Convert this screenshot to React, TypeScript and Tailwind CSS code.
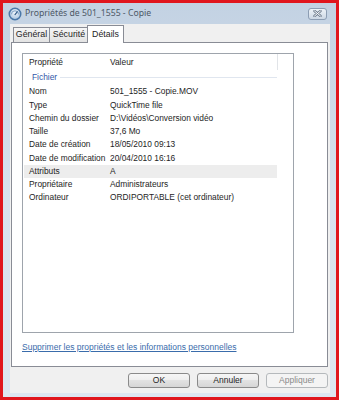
import React from "react";

const rows: [string, string][] = [
  ["Nom", "501_1555 - Copie.MOV"],
  ["Type", "QuickTime file"],
  ["Chemin du dossier", "D:\\Vidéos\\Conversion vidéo"],
  ["Taille", "37,6 Mo"],
  ["Date de création", "18/05/2010 09:13"],
  ["Date de modification", "20/04/2010 16:16"],
  ["Attributs", "A"],
  ["Propriétaire", "Administrateurs"],
  ["Ordinateur", "ORDIPORTABLE (cet ordinateur)"],
];

const WindowIcon: React.FC = () => (
  <svg width="14" height="14" viewBox="0 0 14 14" aria-hidden="true">
    <defs>
      <radialGradient id="ic" cx="50%" cy="35%" r="65%">
        <stop offset="0%" stopColor="#f2f7fc" />
        <stop offset="100%" stopColor="#a9c4df" />
      </radialGradient>
    </defs>
    <circle cx="7" cy="7" r="5.7" fill="url(#ic)" stroke="#4a78a8" strokeWidth="1.6" />
    <path d="M3.4 7.4a3.6 3.6 0 0 1 7.2 0" fill="none" stroke="#7fa2c6" strokeWidth="1" />
    <path d="M7 7.6 9.2 4.8" stroke="#2f5a88" strokeWidth="1.1" strokeLinecap="round" />
  </svg>
);

const CloseButton: React.FC = () => (
  <div className="flex h-[12px] w-[19px] items-center justify-center rounded-[3px] border border-[#8c9db3] bg-gradient-to-b from-[#eef3f8] to-[#cdd8e5]">
    <svg width="9" height="7" viewBox="0 0 9 7" aria-hidden="true">
      <path d="M1.5 1 7.5 6M7.5 1 1.5 6" stroke="#6b7a8c" strokeWidth="2.4" strokeLinecap="round" />
      <path d="M1.5 1 7.5 6M7.5 1 1.5 6" stroke="#ffffff" strokeWidth="1" strokeLinecap="round" />
    </svg>
  </div>
);

export default function App() {
  return (
    <div className="h-[400px] w-[339px] bg-[#e0161e] p-[3px] font-['Liberation_Sans',Arial,sans-serif]">
      <div className="flex h-full flex-col bg-gradient-to-b from-[#c3d2e3] via-[#d8e2ee] to-[#dde6f0]">
        {/* title bar */}
        <div className="flex h-[21px] shrink-0 items-center pl-[5px] pr-[9px]">
          <WindowIcon />
          <span className="ml-[3px] font-['Noto_Sans',sans-serif] text-[8.7px] text-[#4d5866]">
            Propriétés de 501_1555 - Copie
          </span>
          <div className="ml-auto">
            <CloseButton />
          </div>
        </div>

        {/* client area */}
        <div className="mb-[4px] ml-[7px] mr-[6px] flex flex-1 flex-col bg-[#f0f0f0]">
          {/* tabs */}
          <div className="relative z-10 -mb-px flex h-[19px] shrink-0 items-end pl-[3px] text-[8.8px] text-[#1e1e1e]">
            <div className="flex h-[16px] w-[37px] items-center justify-center border border-[#898c95] bg-gradient-to-b from-[#f6f6f6] to-[#e3e3e3]">
              Général
            </div>
            <div className="-ml-px flex h-[16px] w-[40px] items-center justify-center border border-[#898c95] bg-gradient-to-b from-[#f6f6f6] to-[#e3e3e3]">
              Sécurité
            </div>
            <div className="-ml-[2px] flex h-[18px] w-[37px] items-start justify-center border border-b-0 border-[#898c95] bg-white pt-[2px]">
              Détails
            </div>
          </div>

          {/* tab panel */}
          <div className="ml-px mr-[2px] flex flex-1 flex-col border border-[#898c95] bg-white pl-[10px] pt-[10px]">
            <div className="flex h-[280px] w-[272px] flex-col border border-[#9ea4ac] text-[8.4px] text-[#1e1e1e]">
              {/* header */}
              <div className="flex h-[16px] shrink-0 items-center">
                <div className="w-[87px] pl-[6px]">Propriété</div>
                <div className="h-full w-[168px] border-r border-[#e1e4e8] leading-[16px]">Valeur</div>
              </div>
              {/* group */}
              <div className="flex h-[15px] w-[254px] shrink-0 items-center pl-[9px]">
                <span className="text-[#3357a8]">Fichier</span>
                <div className="ml-[3px] h-px flex-1 bg-[#e0e6ef]" />
              </div>
              {rows.map(([k, v]) => (
                <div
                  key={k}
                  className={`ml-px flex h-[13.25px] w-[253px] shrink-0 items-center pl-[5px] ${
                    k === "Attributs" ? "bg-[#ededed]" : ""
                  }`}
                >
                  <div className="w-[81px] whitespace-nowrap">{k}</div>
                  <div className="whitespace-nowrap">{v}</div>
                </div>
              ))}
            </div>
            <div className="mt-[8px] text-[8.5px] leading-[12px] text-[#3a6cab] underline">
              Supprimer les propriétés et les informations personnelles
            </div>
          </div>

          {/* buttons */}
          <div className="flex shrink-0 justify-end gap-[7px] pb-[5px] pr-[2px] pt-[6px] text-[8.5px]">
            <button className="h-[15px] w-[62px] rounded-[3px] border border-[#8a8a8a] bg-[linear-gradient(#f6f6f6,#eeeeee_50%,#e2e2e2_50%,#d6d6d6)] text-[#1e1e1e]">
              OK
            </button>
            <button className="h-[15px] w-[62px] rounded-[3px] border border-[#8a8a8a] bg-[linear-gradient(#f6f6f6,#eeeeee_50%,#e2e2e2_50%,#d6d6d6)] text-[#1e1e1e]">
              Annuler
            </button>
            <button className="h-[15px] w-[62px] rounded-[3px] border border-[#b5b9bc] bg-[#f4f4f4] text-[#8a8a8a]">
              Appliquer
            </button>
          </div>
        </div>
      </div>
    </div>
  );
}
